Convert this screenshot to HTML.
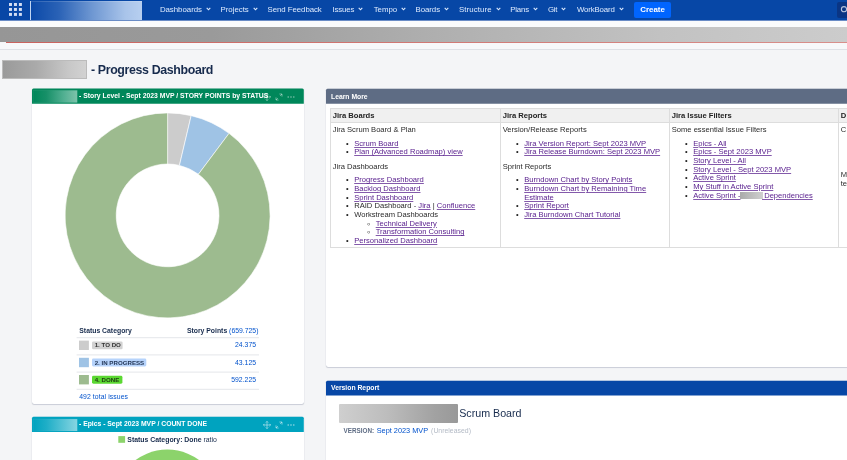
<!DOCTYPE html>
<html><head><meta charset="utf-8">
<style>
*{box-sizing:border-box;margin:0;padding:0}
html,body{width:847px;height:460px;overflow:hidden;background:#f4f5f7;font-family:"Liberation Sans",sans-serif;color:#172b4d}
body{position:relative}
#w{position:absolute;left:0;top:0;width:847px;height:460px;overflow:hidden;will-change:transform}
.abs{position:absolute}
#nav{left:0;top:0;width:847px;height:21px;background:#0747a6}
#nav .mi{position:absolute;top:0px;height:21px;line-height:20px;font-size:7.85px;color:#deebff;white-space:nowrap}
#nav .mi svg{display:inline-block;vertical-align:middle;margin-left:4.2px;margin-top:-1px}
#navred{left:30px;top:1px;width:112px;height:19px;background:linear-gradient(90deg,#0b49a8 0%,#2a62b6 25%,#6e97d2 55%,#a9c4ea 85%,#b7cff0 100%);border:1px solid rgba(255,255,255,.15);border-right:none;border-bottom:none}
#create{left:634px;top:2px;width:37px;height:16px;background:#0065ff;border-radius:2px;color:#fff;font-size:7.9px;font-weight:bold;text-align:center;line-height:16px}
#search{left:837px;top:2px;width:14px;height:16px;background:#0a3584;border-radius:2px}
#nav{border-bottom:1px solid #6a8cc6}
#strip1{left:0;top:21px;width:847px;height:6px;background:#fafbfc}
#graybar{left:0;top:27px;width:847px;height:15px;background:linear-gradient(90deg,#969696 0%,#9a9a9a 25%,#aeaeae 50%,#c2c2c2 78%,#cccccc 100%)}
#redline{left:6px;top:42px;width:841px;height:1px;background:linear-gradient(90deg,#c9625e,#d88f8b)}
#strip2{left:0;top:43px;width:847px;height:6px;background:#f7f8fa}
#hline{left:0;top:49px;width:847px;height:1px;background:#dfe1e6}
#titlered{left:2px;top:60px;width:85px;height:19px;background:linear-gradient(90deg,#9a9a9a 0%,#aaa 40%,#c8c8c8 80%,#d2d2d2 100%);border:1px solid #bbb}
#title{left:91px;top:62.6px;font-size:12.4px;font-weight:bold;color:#172b4d;white-space:nowrap;letter-spacing:-0.37px}
.gadget{background:#fff;border-radius:2px;box-shadow:0 0 1px rgba(9,30,66,.3),0 1px 1px rgba(9,30,66,.15)}
.gt{color:#fff;font-size:6.8px;font-weight:bold;line-height:14.6px;white-space:nowrap}
.bl{color:#0052cc !important}
.t{position:absolute;white-space:nowrap;font-size:6.85px;line-height:10px;color:#172b4d}
.lz{position:absolute;left:94.7px;font-size:6.15px;font-weight:bold;line-height:8px;white-space:nowrap}
table.lm{border-collapse:collapse;table-layout:fixed;font-size:7.6px;color:#2a2a2a;line-height:8.66px}
.lm th,.lm td{border:1px solid #ddd;vertical-align:top;text-align:left;padding:2.2px 2.2px}
.lm th{background:#f0f0f0;font-weight:bold;height:14px;line-height:9.5px;color:#222}
.lm td{height:119px;padding-top:2.5px;padding-bottom:1.1px}
.lm p{margin:0 0 5.2px 0}
.lm ul{margin:0 0 5.5px 0;padding-left:21.5px;list-style:none}
.lm li{position:relative}
.lm li::before{content:"•";position:absolute;left:-8.1px;top:0;font-size:7.4px;line-height:8.9px;color:#222}
.lm ul ul{margin:0}
.lm td>ul:last-child{margin-bottom:0}
.lm ul ul li::before{content:"◦";left:-8.6px;font-size:9.5px;line-height:8.2px;color:#111}
.lm a{color:#551a8b;text-decoration:underline;text-decoration-color:rgba(85,26,139,.72);text-decoration-thickness:.6px;text-underline-offset:.8px}
.rd{display:inline-block;width:22.4px;margin-right:-.8px;height:7px;background:linear-gradient(90deg,#aaa,#d0d0d0);vertical-align:-1px}
</style></head><body><div id="w">
<div id="nav" class="abs">
  <svg class="abs" style="left:8.9px;top:2.9px" width="12.9" height="12.9" viewBox="0 0 13 13"><g fill="#d3def3"><rect x="0" y="0" width="3" height="3"/><rect x="5" y="0" width="3" height="3"/><rect x="10" y="0" width="3" height="3"/><rect x="0" y="5" width="3" height="3"/><rect x="5" y="5" width="3" height="3"/><rect x="10" y="5" width="3" height="3"/><rect x="0" y="10" width="3" height="3"/><rect x="5" y="10" width="3" height="3"/><rect x="10" y="10" width="3" height="3"/></g></svg>
  <div id="navred" class="abs"></div>
  <div class="mi" style="left:159.9px;letter-spacing:-0.022px">Dashboards<svg width="5" height="4" viewBox="0 0 5 4"><path d="M0.7 0.8 L2.5 2.8 L4.3 0.8" stroke="#deebff" stroke-width="1.1" fill="none"/></svg></div><div class="mi" style="left:220.5px;letter-spacing:-0.006px">Projects<svg width="5" height="4" viewBox="0 0 5 4"><path d="M0.7 0.8 L2.5 2.8 L4.3 0.8" stroke="#deebff" stroke-width="1.1" fill="none"/></svg></div><div class="mi" style="left:267.6px;letter-spacing:-0.063px">Send Feedback</div><div class="mi" style="left:332.5px;letter-spacing:-0.154px">Issues<svg width="5" height="4" viewBox="0 0 5 4"><path d="M0.7 0.8 L2.5 2.8 L4.3 0.8" stroke="#deebff" stroke-width="1.1" fill="none"/></svg></div><div class="mi" style="left:373.7px;letter-spacing:-0.037px">Tempo<svg width="5" height="4" viewBox="0 0 5 4"><path d="M0.7 0.8 L2.5 2.8 L4.3 0.8" stroke="#deebff" stroke-width="1.1" fill="none"/></svg></div><div class="mi" style="left:415.6px;letter-spacing:-0.072px">Boards<svg width="5" height="4" viewBox="0 0 5 4"><path d="M0.7 0.8 L2.5 2.8 L4.3 0.8" stroke="#deebff" stroke-width="1.1" fill="none"/></svg></div><div class="mi" style="left:458.9px;letter-spacing:0.109px">Structure<svg width="5" height="4" viewBox="0 0 5 4"><path d="M0.7 0.8 L2.5 2.8 L4.3 0.8" stroke="#deebff" stroke-width="1.1" fill="none"/></svg></div><div class="mi" style="left:510.3px;letter-spacing:-0.206px">Plans<svg width="5" height="4" viewBox="0 0 5 4"><path d="M0.7 0.8 L2.5 2.8 L4.3 0.8" stroke="#deebff" stroke-width="1.1" fill="none"/></svg></div><div class="mi" style="left:547.9px;letter-spacing:-0.216px">Git<svg width="5" height="4" viewBox="0 0 5 4"><path d="M0.7 0.8 L2.5 2.8 L4.3 0.8" stroke="#deebff" stroke-width="1.1" fill="none"/></svg></div><div class="mi" style="left:576.9px;letter-spacing:-0.149px">WorkBoard<svg width="5" height="4" viewBox="0 0 5 4"><path d="M0.7 0.8 L2.5 2.8 L4.3 0.8" stroke="#deebff" stroke-width="1.1" fill="none"/></svg></div>
  <div id="create" class="abs">Create</div>
  <div id="search" class="abs"></div><svg class="abs" style="left:838px;top:4px" width="9" height="12" viewBox="0 0 9 12"><circle cx="6" cy="5.2" r="2.6" stroke="#b5c2dc" stroke-width="1.1" fill="none"/></svg>
</div>
<div id="strip1" class="abs"></div>
<div id="graybar" class="abs"></div>
<div id="redline" class="abs"></div>
<div id="strip2" class="abs"></div>
<div id="hline" class="abs"></div>
<div id="titlered" class="abs"></div>
<div id="title" class="abs">- Progress Dashboard</div>

<!-- gadget 1 -->
<div class="abs gadget" style="left:32px;top:89px;width:271.7px;height:314.6px"></div>
<div class="abs gadget" style="left:32px;top:417px;width:271.7px;height:60px"></div>
<div class="abs gadget" style="left:326px;top:89px;width:540px;height:277.5px"></div>
<div class="abs gadget" style="left:326px;top:381px;width:540px;height:100px"></div>
<svg class="abs" style="left:0;top:0" width="847" height="460" viewBox="0 0 847 460"><path d="M32 103.8V90.1a1.5 1.5 0 0 1 1.5-1.5H302.3a1.5 1.5 0 0 1 1.5 1.5V103.8Z" fill="#00875a"/><path d="M32 432.1V418.3a1.5 1.5 0 0 1 1.5-1.5H302.3a1.5 1.5 0 0 1 1.5 1.5V432.1Z" fill="#00a3bf"/><path d="M326 103.8V90.2a1.5 1.5 0 0 1 1.5-1.5H860V103.8Z" fill="#5e6c84"/><path d="M326 395.6V382.2a1.5 1.5 0 0 1 1.5-1.5H860V395.6Z" fill="#0747a6"/><defs><linearGradient id="gg" x1="0" x2="1" y1="0" y2="0"><stop offset="0" stop-color="#00875a"/><stop offset=".3" stop-color="#179068"/><stop offset=".7" stop-color="#52b092"/><stop offset="1" stop-color="#7ec3ab"/></linearGradient><linearGradient id="gt" x1="0" x2="1" y1="0" y2="0"><stop offset="0" stop-color="#00a3bf"/><stop offset=".3" stop-color="#1eaec7"/><stop offset=".7" stop-color="#5ac4d6"/><stop offset="1" stop-color="#86d5e2"/></linearGradient></defs><rect x="33.1" y="90.4" width="44.1" height="12.1" fill="url(#gg)" stroke="#fff" stroke-opacity=".12" stroke-width=".5"/><rect x="33.1" y="419.1" width="44.1" height="11.9" fill="url(#gt)" stroke="#fff" stroke-opacity=".12" stroke-width=".5"/></svg>

<div class="abs gt" id="g1t" style="left:79px;top:89.2px;letter-spacing:.01px">- Story Level - Sept 2023 MVP / STORY POINTS by STATUS</div>
<svg class="abs" style="left:263px;top:92.5px" width="32" height="8" viewBox="0 0 32 8"><g stroke="#fff" stroke-opacity="0.5" stroke-width=".8" fill="none"><path d="M4 0.4V7.6M0.4 4H7.6M2.8 1.6L4 0.4L5.2 1.6M2.8 6.4L4 7.6L5.2 6.4M1.6 2.8L0.4 4L1.6 5.2M6.4 2.8L7.6 4L6.4 5.2"/><path d="M13 7L14.9 5.1M17.1 2.9L19 1M16.4 1H19V3.6M13 4.4V7H15.6"/></g><g fill="#fff" fill-opacity="0.5"><circle cx="25.2" cy="4" r=".8"/><circle cx="28" cy="4" r=".8"/><circle cx="30.8" cy="4" r=".8"/></g></svg>
<svg class="abs" style="left:0;top:0" width="847" height="460" viewBox="0 0 847 460"><path d="M167.60 112.90 A102.5 102.5 0 0 1 191.18 115.65 L179.43 165.38 A51.4 51.4 0 0 0 167.60 164.00 Z" fill="#cccccc" stroke="#fff" stroke-width="0.6"/><path d="M191.18 115.65 A102.5 102.5 0 0 1 229.05 133.36 L198.41 174.26 A51.4 51.4 0 0 0 179.43 165.38 Z" fill="#9fc3e5" stroke="#fff" stroke-width="0.6"/><path d="M229.05 133.36 A102.5 102.5 0 1 1 167.60 112.90 L167.60 164.00 A51.4 51.4 0 1 0 198.41 174.26 Z" fill="#9dbb8f" stroke="#fff" stroke-width="0.6"/><rect x="76.6" y="337.2" width="182.4" height="1" fill="#e4e6ea"/><rect x="76.6" y="354.4" width="182.4" height="1" fill="#e4e6ea"/><rect x="76.6" y="371.6" width="182.4" height="1" fill="#e4e6ea"/><rect x="76.6" y="388.8" width="182.4" height="1" fill="#e4e6ea"/><rect x="79" y="340.6" width="9.9" height="9.4" fill="#cccccc"/><rect x="92" y="341.4" width="30.6" height="7.9" rx="1.4" fill="#d2d2d2"/><rect x="79" y="357.8" width="9.9" height="9.4" fill="#9fc3e5"/><rect x="92" y="358.6" width="54.3" height="7.9" rx="1.4" fill="#b6d3fb"/><rect x="79" y="375.0" width="9.9" height="9.4" fill="#9dbb8f"/><rect x="92" y="375.8" width="30.4" height="7.9" rx="1.4" fill="#5bd832"/></svg>
<div class="t" id="lh1" style="left:79.3px;top:325.6px;font-weight:bold">Status Category</div>
<div class="t" id="lh2" style="right:588.6px;top:325.6px;font-weight:bold">Story Points <span class="bl" style="font-weight:normal">(659.725)</span></div>
<div class="lz" style="top:341.4px;color:#333">1. TO DO</div>
<div class="lz" style="top:358.6px;color:#253858">2. IN PROGRESS</div>
<div class="lz" style="top:375.8px;color:#1d3a12">4. DONE</div>
<div class="t bl" style="right:591px;top:340.4px">24.375</div>
<div class="t bl" style="right:591px;top:357.6px">43.125</div>
<div class="t bl" style="right:591px;top:374.8px">592.225</div>
<div class="t bl" id="tot" style="left:79.2px;top:391.5px;letter-spacing:.08px">492 total issues</div>

<!-- gadget 2 -->



<div class="abs gt" id="g2t" style="left:79px;top:417.25px">- Epics - Sept 2023 MVP / COUNT DONE</div>
<svg class="abs" style="left:263px;top:420.6px" width="32" height="8" viewBox="0 0 32 8"><g stroke="#fff" stroke-opacity="0.6" stroke-width=".8" fill="none"><path d="M4 0.4V7.6M0.4 4H7.6M2.8 1.6L4 0.4L5.2 1.6M2.8 6.4L4 7.6L5.2 6.4M1.6 2.8L0.4 4L1.6 5.2M6.4 2.8L7.6 4L6.4 5.2"/><path d="M13 7L14.9 5.1M17.1 2.9L19 1M16.4 1H19V3.6M13 4.4V7H15.6"/></g><g fill="#fff" fill-opacity="0.6"><circle cx="25.2" cy="4" r=".8"/><circle cx="28" cy="4" r=".8"/><circle cx="30.8" cy="4" r=".8"/></g></svg>
<svg class="abs" style="left:0;top:430px" width="847" height="30" viewBox="0 430 847 30"><rect x="118.3" y="436.1" width="6.8" height="6.7" fill="#8cd36b"/><circle cx="167.3" cy="503.1" r="53.5" fill="#8cd36b"/></svg>
<div class="t" id="g2l" style="left:127.3px;top:435px;font-size:6.9px"><b>Status Category: Done</b> ratio</div>

<!-- gadget 3 -->


<div class="abs gt" id="g3t" style="left:331px;top:90px">Learn More</div>
<table class="abs lm" style="left:329.5px;top:107.5px;width:678px">
<colgroup><col style="width:170px"><col style="width:169px"><col style="width:169px"><col style="width:170px"></colgroup>
<tr><th>Jira Boards</th><th>Jira Reports</th><th>Jira Issue Filters</th><th>D</th></tr>
<tr>
<td><p>Jira Scrum Board &amp; Plan</p>
<ul><li><a>Scrum Board</a></li><li><a>Plan (Advanced Roadmap) view</a></li></ul>
<p>Jira Dashboards</p>
<ul><li><a>Progress Dashboard</a></li><li><a>Backlog Dashboard</a></li><li><a>Sprint Dashboard</a></li><li>RAID Dashboard - <a>Jira</a> | <a>Confluence</a></li><li>Workstream Dashboards<ul><li><a>Technical Delivery</a></li><li><a>Transformation Consulting</a></li></ul></li><li><a>Personalized Dashboard</a></li></ul></td>
<td><p>Version/Release Reports</p>
<ul><li><a>Jira Version Report: Sept 2023 MVP</a></li><li><a>Jira Release Burndown: Sept 2023 MVP</a></li></ul>
<p>Sprint Reports</p>
<ul><li><a>Burndown Chart by Story Points</a></li><li><a>Burndown Chart by Remaining Time Estimate</a></li><li><a>Sprint Report</a></li><li><a>Jira Burndown Chart Tutorial</a></li></ul></td>
<td><p>Some essential Issue Filters</p>
<ul><li><a>Epics - All</a></li><li><a>Epics - Sept 2023 MVP</a></li><li><a>Story Level - All</a></li><li><a>Story Level - Sept 2023 MVP</a></li><li><a>Active Sprint</a></li><li><a>My Stuff in Active Sprint</a></li><li><a>Active Sprint -<span class="rd"></span> Dependencies</a></li></ul></td>
<td><p>C</p><p style="margin-top:35.4px;line-height:9px">M<br>te</p></td>
</tr></table>

<!-- gadget 4 -->


<div class="abs gt" id="g4t" style="left:331px;top:381.4px">Version Report</div>
<div class="abs" style="left:339.3px;top:404px;width:118.5px;height:19px;border-radius:1px;background:linear-gradient(90deg,#cfcfcf 0%,#bdbdbd 40%,#a2a2a2 80%,#999 100%)"></div>
<div class="t" id="sb" style="left:459.2px;top:405.7px;font-size:10.7px;line-height:15px">Scrum Board</div>
<div class="t" id="v1" style="left:343.6px;top:426.3px;font-size:6.3px;font-weight:bold;color:#5e6c84">VERSION:</div>
<div class="t bl" id="v2" style="left:376.7px;top:426.1px;font-size:7.35px">Sept 2023 MVP</div>
<div class="t" id="v3" style="left:431.1px;top:426.1px;font-size:6.9px;color:#b3bac5">(Unreleased)</div>
</div></body></html>
